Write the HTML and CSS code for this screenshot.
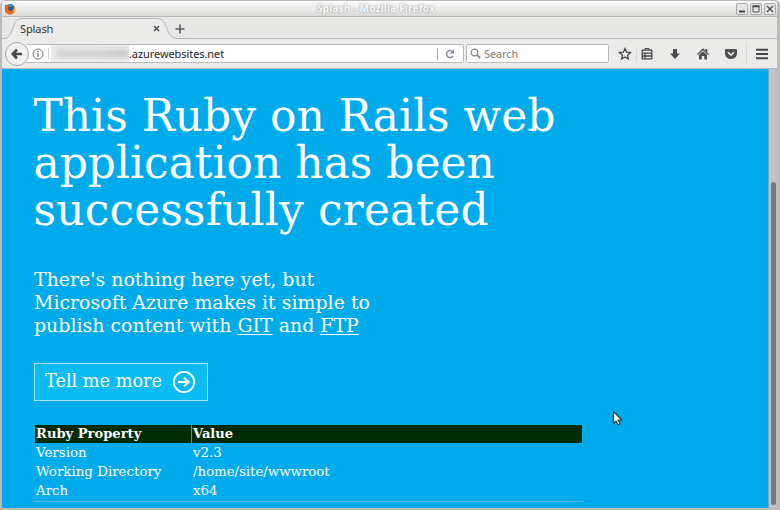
FILE: index.html
```html
<!DOCTYPE html>
<html lang="en">
<head>
<meta charset="utf-8">
<title>Splash</title>
<link rel="stylesheet" href="styles.css">
</head>
<body>
<div class="window">
  <header class="titlebar">
    <svg class="firefox" width="12" height="12" viewBox="0 0 12 12"><circle cx="6" cy="6" r="5" fill="#28589b"/><path d="M3 2.500Q6 0 9 2L7 4Z" fill="#4d9bc9"/><path d="M.7 3.500L1.500 1.500 3 3 5 3.500 4 5.500Q5 8.500 8 7.500 10 6.500 9.500 2 12 5 11 8.500 9 12 5 11.600 0 10 .7 3.500Z" fill="#e2681b"/><path d="M10 2.500Q12.500 6 10 9.500L8.500 9Q10.500 6 10 2.500Z" fill="#f7b733"/></svg>
    <span class="caption">Splash - Mozilla Firefox</span>
    <div class="controls">
      <span class="control"><svg width="12" height="12"><path d="M3 8.500h6" stroke="#444" stroke-width="2"/></svg></span>
      <span class="control"><svg width="12" height="12"><path d="M3 3.500h6v5.500h-6z" fill="none" stroke="#555"/><path d="M2.500 3.300h7" stroke="#444" stroke-width="2"/></svg></span>
      <span class="control"><svg width="12" height="12"><path d="M3 3l6 6M9 3l-6 6" stroke="#555" stroke-width="1.500"/></svg></span>
    </div>
  </header>
  <div class="tabs">
    <svg class="tabshape" width="186" height="22" viewBox="0 0 186 22"><path d="M0 22V21.500H2C13 21.500 8 1.500 20 1.500H155C168 1.500 162 21.500 175 21.500H186V22Z" fill="#ebebe9"/><path d="M0 21.500H2C13 21.500 8 1.500 20 1.500H155C168 1.500 162 21.500 175 21.500H186" fill="none" stroke="#b5b5b9"/></svg>
    <span class="tabname">Splash</span>
    <svg class="tabclose" width="7" height="7"><path d="M1 1l5 5M6 1l-5 5" stroke="#555" stroke-width="1.700"/></svg>
    <svg class="newtab" width="10" height="10"><path d="M5 .5v9M.5 5h9" stroke="#555" stroke-width="1.600"/></svg>
  </div>
  <nav class="toolbar">
    <div class="back"><svg width="12" height="12"><path d="M6 1.500L1.800 6 6 10.500M2.500 6h8.500" fill="none" stroke="#4b4b4b" stroke-width="2.700"/></svg></div>
    <div class="address">
      <svg class="info" width="12" height="12"><circle cx="6" cy="6" r="5" fill="none" stroke="#777"/><path d="M6 5v4M6 2.700v1.400" stroke="#666" stroke-width="1.300"/></svg>
      <span class="divider"></span>
      <span class="redacted"><i></i></span>
      <span class="url">.azurewebsites.net</span>
      <span class="reload"><svg width="10" height="10"><path d="M8 7A3.500 3.500 0 1 1 7.500 2.500" fill="none" stroke="#8895a4" stroke-width="1.500"/><path d="M9 0v4.500H4.700Z" fill="#8895a4"/></svg></span>
    </div>
    <div class="search">
      <svg width="12" height="12"><circle cx="4.500" cy="4.500" r="3.400" fill="none" stroke="#888" stroke-width="1.300"/><path d="M7 7l3.300 3" stroke="#888" stroke-width="1.700"/></svg>
      <span>Search</span>
    </div>
    <div class="actions">
      <svg width="14" height="14" viewBox="0 0 14 14"><path d="M7 1.500L8.600 5.200 12.500 5.500 9.500 8.200 10.400 12 7 10 3.600 12 4.500 8.200 1.500 5.500 5.400 5.200Z" fill="none" stroke="#444" stroke-width="1.250"/></svg>
      <span class="rule short"></span>
      <svg class="clipboard" width="14" height="14" viewBox="0 0 14 14"><path d="M2.200 3.200h9.600v8.600H2.200zM2.500 6.200h9M2.500 9h9M5 6v6" fill="none" stroke="#484848" stroke-width="1.300"/><path d="M5 3V1.500h4V3" fill="none" stroke="#484848"/></svg>
      <svg class="download" width="14" height="14" viewBox="0 0 14 14"><path d="M5 2h4v4.500h3L7 12 2 6.500h3Z" fill="#494949"/></svg>
      <svg class="home" width="14" height="14" viewBox="0 0 14 14"><path d="M1.500 7.500L7 2.300l5.500 5.200" fill="none" stroke="#505050" stroke-width="1.400"/><path d="M3 8l4-3.700L11 8v4.500H8.300V9H5.700v3.500H3zM9.500 2h1.800v3.500L9.500 4z" fill="#505050"/></svg>
      <svg class="pocket" width="14" height="14" viewBox="0 0 14 14"><path d="M2 2h10q1 0 1 1v3.500a6 5.600 0 0 1-12 0V3q0-1 1-1" fill="#505050"/><path d="M4 5.200l3 3 3-3" fill="none" stroke="#f2f2f2" stroke-width="1.600"/></svg>
      <span class="rule"></span>
      <svg class="menu" width="12" height="12"><path d="M0 1.800h12M0 6h12M0 10.200h12" stroke="#444" stroke-width="1.900"/></svg>
    </div>
  </nav>
  <div class="viewport">
    <main class="page">
      <h1>This Ruby on Rails web<br>application has been<br><span class="last">successfully created</span></h1>
      <p>There's nothing here yet, but<br>Microsoft Azure makes it simple to<br>publish content with <a>GIT</a> and <a>FTP</a></p>
      <div class="more"><span>Tell me more</span><svg width="24" height="24"><circle cx="12" cy="12" r="10.200" fill="none" stroke="#fff" stroke-width="1.800"/><path d="M6 12h10M12 7.700l4.600 4.300-4.600 4.300" fill="none" stroke="#fff" stroke-width="2.200"/></svg></div>
      <div class="props">
        <div class="row head"><b>Ruby Property</b><b>Value</b></div>
        <div class="row"><span>Version</span><span>v2.3</span></div>
        <div class="row"><span>Working Directory</span><span>/home/site/wwwroot</span></div>
        <div class="row"><span>Arch</span><span>x64</span></div>
      </div>
    </main>
    <div class="scrollbar"><div class="thumb"></div></div>
  </div>
</div>
<svg class="pointer" width="12" height="18" viewBox="0 0 12 18"><path d="M1.500 1.500v12l2.600-2.300 2 3.700 2-1-1.900-3.600 3.500-.4Z" fill="#fff" stroke="#163044" stroke-width="1.100"/></svg>
</body>
</html>
```

FILE: styles.css
```css
* { box-sizing: border-box; }
body { margin: 0; width: 780px; height: 510px; overflow: hidden; background: #fff; font-family: "Noto Sans", sans-serif; }
svg { display: block; flex: none; }
.window { display: flex; flex-direction: column; width: 780px; height: 510px; border: solid #bdbbb9; border-width: 1px 2px 2px; border-right-width: 3px; border-radius: 5px 5px 0 0; background: #e9e9e7; overflow: hidden; }
.titlebar { display: flex; align-items: center; height: 16px; background: linear-gradient(#fdfdfd, #d9d9d7); border-bottom: 1px solid #b9b9b7; position: relative; padding-left: 2px; }
.caption { flex: 1; text-align: center; font-size: 10px; line-height: 15px; font-weight: 700; color: #fafafa; text-shadow: 0 0 1px #aaa, 0 0 2px #999; letter-spacing: .2px; }
.controls { display: flex; gap: 2px; padding-right: 1px; }
.control { display: flex; align-items: center; justify-content: center; width: 12px; height: 12px; border: 1px solid #aaa; border-radius: 2px; background: #e5e5e4; }
.tabs { display: flex; height: 22px; background: #e7e7e5; box-shadow: inset 0 -1px #b9b9b9; position: relative; }
.tabshape { position: absolute; left: 0; top: 0; }
.tabname { position: relative; width: 133px; margin-left: 18px; font-size: 11px; line-height: 23px; color: #333; letter-spacing: -.1px; }
.tabclose { position: relative; margin-top: 8px; }
.newtab { position: relative; margin: 7px 0 0 15px; }
.toolbar { display: flex; align-items: center; height: 30px; background: #ebebe9; border-bottom: 1px solid #b4b6b4; }
.back { display: flex; align-items: center; justify-content: center; width: 24px; height: 24px; margin-left: 3px; border: 1px solid #aaa; border-radius: 50%; background: #f1f1f0; position: relative; z-index: 1; }
.address { display: flex; align-items: center; height: 19px; width: 438px; margin-left: -3px; padding-left: 6px; background: #fff; border: 1px solid #bbb; border-left: 0; border-radius: 0 2px 2px 0; }
.divider { width: 1px; height: 11px; margin: 0 2px 0 4px; background: #ccc; }
.redacted { width: 78px; height: 17px; overflow: hidden; background: #ededed; display: flex; align-items: center; }
.redacted i { display: block; width: 73px; height: 7px; margin-left: 5px; background: linear-gradient(90deg, #ccc, #c9c9c9 60%, #bbb); filter: blur(3px); }
.url { font-size: 11px; line-height: 17px; color: #222; flex: 1; letter-spacing: -.08px; }
.reload { display: flex; border-left: 1px solid #aaa; padding: 1px 8px 1px 7px; }
.search { display: flex; align-items: center; gap: 2px; width: 143px; height: 19px; margin-left: 2px; padding-left: 3px; background: #fff; border: 1px solid #bbb; border-radius: 2px; color: #7c7c7c; font-size: 11px; line-height: 17px; letter-spacing: -.1px; }
.actions { display: flex; align-items: center; margin-left: 9px; }
.rule { width: 1px; height: 24px; margin-left: 8px; background: #d8d8d7; }
.short { height: 14px; margin-left: 4px; }
.clipboard { margin-left: 3px; }
.download, .home, .pocket { margin-left: 14px; }
.menu { margin-left: 9px; }
.viewport { display: flex; flex: 1; min-height: 0; }
.page { width: 766px; padding: 23px 0 0 32px; background: #00abec; color: #fff; font-family: "DejaVu Serif", serif; overflow: hidden; }
h1 { margin: 0 0 0 -.5px; font-size: 43.95px; line-height: 47px; font-weight: 400; white-space: nowrap; }
.last { letter-spacing: .15px; }
p { margin: 35.3px 0 0; font-size: 18.95px; line-height: 22.8px; white-space: nowrap; }
a { text-decoration: underline; text-decoration-thickness: 1px; text-underline-offset: 2px; }
.more { display: flex; align-items: center; justify-content: space-between; width: 174px; height: 38px; margin-top: 26.3px; padding: 0 11px 0 10px; border: 1px solid #a5e5fa; background: #0abbf4; font-size: 17.7px; line-height: 34px; white-space: nowrap; }
.more span { margin-top: -2px; }
.props { width: 549px; margin-top: 24px; padding: 0 1px 1px; border-bottom: 1px solid #52afd2; font-size: 13.4px; }
.row { display: grid; grid-template-columns: 156px 390px; column-gap: 1px; height: 19px; line-height: 19px; }
.row > * { padding-left: 1px; white-space: nowrap; }
.row > :last-child { padding-left: 1px; letter-spacing: -.05px; }
.head { height: 18px; line-height: 18px; font-size: 13.1px; }
.head b { background: #002b00; }
.scrollbar { width: 9px; background: #c1c3c3; border-left: 1px solid #7aa6b5; padding: 113px 0 0 2px; }
.thumb { width: 5px; height: 323px; border-radius: 3px; background: #72797a; }
.pointer { position: absolute; left: 612px; top: 410px; }
```
